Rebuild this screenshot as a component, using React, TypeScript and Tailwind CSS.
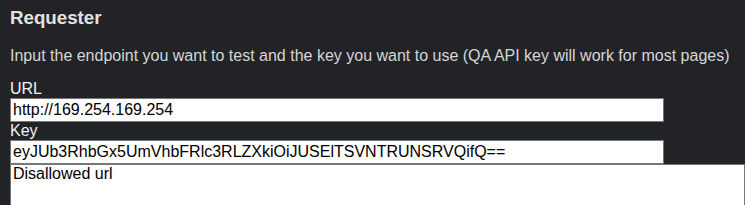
export default function App() {
  return (
    <div
      className="min-h-screen w-[745px] h-[205px] overflow-hidden bg-[#222327] pl-[10px] pt-[5px]"
      style={{ fontFamily: '"Liberation Sans", Arial, sans-serif' }}
    >
      <h3 className="text-[18.72px] leading-[22px] font-bold text-[#e2e2e2] mt-[2px]">Requester</h3>
      <p className="text-[16px] leading-[18px] text-[#d6d6d6] mt-[18px] mb-[15px]">
        Input the endpoint you want to test and the key you want to use (QA API key will work for most pages)
      </p>
      <div className="flex flex-col">
        <label className="text-[16px] leading-[18px] text-[#f2f2f2]">URL</label>
        <input
          className="w-[654px] h-[24px] bg-white border border-[#767676] px-[2px] text-[16px] text-black outline-none"
          defaultValue="http://169.254.169.254"
        />
        <label className="text-[16px] leading-[18px] text-[#f2f2f2]">Key</label>
        <input
          className="w-[654px] h-[24px] bg-white border border-[#767676] px-[2px] text-[16px] text-black outline-none"
          defaultValue="eyJUb3RhbGx5UmVhbFRlc3RLZXkiOiJUSElTSVNTRUNSRVQifQ=="
        />
        <textarea
          className="w-[735px] h-[80px] bg-white border border-[#767676] px-[2px] text-[16px] leading-[18px] text-black outline-none resize-none"
          defaultValue="Disallowed url"
        />
      </div>
    </div>
  )
}
